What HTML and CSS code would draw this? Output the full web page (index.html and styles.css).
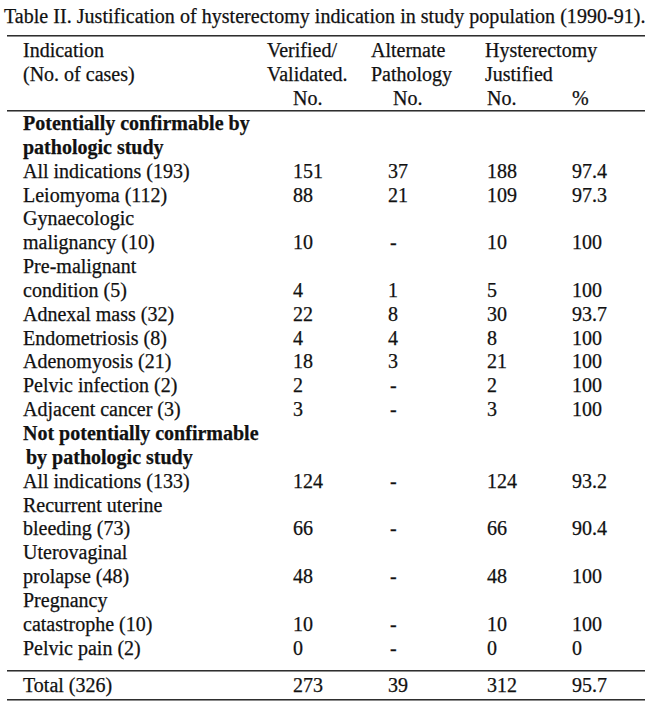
FILE: index.html
```html
<!DOCTYPE html>
<html lang="en">
<head>
<meta charset="utf-8">
<title>Table II</title>
<link rel="stylesheet" href="styles.css">
</head>
<body>
<div class="page">
  <div class="title">Table II. Justification of hysterectomy indication in study population (1990-91).</div>
  <div class="rule rule-top"></div>
  <div class="head">
    <div class="row"><div>Indication</div><div>Verified/</div><div>Alternate</div><div class="wide">Hysterectomy</div><div></div></div>
    <div class="row"><div>(No. of cases)</div><div>Validated.</div><div>Pathology</div><div>Justified</div><div></div></div>
    <div class="row"><div></div><div class="n1">No.</div><div class="h2">No.</div><div class="n3">No.</div><div class="n4">%</div></div>
  </div>
  <div class="rule rule-mid"></div>
  <div class="body">
    <div class="row"><div class="b">Potentially confirmable by</div></div>
    <div class="row"><div class="b">pathologic study</div></div>
    <div class="row"><div>All indications (193)</div><div class="n1">151</div><div class="n2">37</div><div class="n3">188</div><div class="n4">97.4</div></div>
    <div class="row"><div>Leiomyoma (112)</div><div class="n1">88</div><div class="n2">21</div><div class="n3">109</div><div class="n4">97.3</div></div>
    <div class="row"><div>Gynaecologic</div></div>
    <div class="row"><div>malignancy (10)</div><div class="n1">10</div><div class="n2 dash">-</div><div class="n3">10</div><div class="n4">100</div></div>
    <div class="row"><div>Pre-malignant</div></div>
    <div class="row"><div>condition (5)</div><div class="n1">4</div><div class="n2">1</div><div class="n3">5</div><div class="n4">100</div></div>
    <div class="row"><div>Adnexal mass (32)</div><div class="n1">22</div><div class="n2">8</div><div class="n3">30</div><div class="n4">93.7</div></div>
    <div class="row"><div>Endometriosis (8)</div><div class="n1">4</div><div class="n2">4</div><div class="n3">8</div><div class="n4">100</div></div>
    <div class="row"><div>Adenomyosis (21)</div><div class="n1">18</div><div class="n2">3</div><div class="n3">21</div><div class="n4">100</div></div>
    <div class="row"><div>Pelvic infection (2)</div><div class="n1">2</div><div class="n2 dash">-</div><div class="n3">2</div><div class="n4">100</div></div>
    <div class="row"><div>Adjacent cancer (3)</div><div class="n1">3</div><div class="n2 dash">-</div><div class="n3">3</div><div class="n4">100</div></div>
    <div class="row"><div class="b">Not potentially confirmable</div></div>
    <div class="row"><div class="b indent">by pathologic study</div></div>
    <div class="row"><div>All indications (133)</div><div class="n1">124</div><div class="n2 dash">-</div><div class="n3">124</div><div class="n4">93.2</div></div>
    <div class="row"><div>Recurrent uterine</div></div>
    <div class="row"><div>bleeding (73)</div><div class="n1">66</div><div class="n2 dash">-</div><div class="n3">66</div><div class="n4">90.4</div></div>
    <div class="row"><div>Uterovaginal</div></div>
    <div class="row"><div>prolapse (48)</div><div class="n1">48</div><div class="n2 dash">-</div><div class="n3">48</div><div class="n4">100</div></div>
    <div class="row"><div>Pregnancy</div></div>
    <div class="row"><div>catastrophe (10)</div><div class="n1">10</div><div class="n2 dash">-</div><div class="n3">10</div><div class="n4">100</div></div>
    <div class="row"><div>Pelvic pain (2)</div><div class="n1">0</div><div class="n2 dash">-</div><div class="n3">0</div><div class="n4">0</div></div>
  </div>
  <div class="rule rule-total"></div>
  <div class="total">
    <div class="row"><div>Total (326)</div><div class="n1">273</div><div class="n2">39</div><div class="n3">312</div><div class="n4">95.7</div></div>
  </div>
  <div class="rule rule-bottom"></div>
</div>
</body>
</html>
```

FILE: styles.css
```css
html, body {
  margin: 0;
  padding: 0;
  background: #ffffff;
}

.page {
  width: 650px;
  height: 712px;
  font-family: "Liberation Serif", "Times New Roman", serif;
  font-size: 20px;
  color: #111111;
  -webkit-text-stroke: 0.25px #111111;
  padding-top: 4px;
  box-sizing: border-box;
  overflow: hidden;
}

.title {
  line-height: 24px;
  padding-left: 4px;
  white-space: nowrap;
  letter-spacing: 0.03px;
}

.rule {
  margin-left: 7px;
  width: 638px;
  height: 0;
  border-top: 1px solid #2e2e2e;
  border-bottom: 1px solid #8c8c8c;
}

.rule-top { margin-top: 7px; }
.rule-mid { margin-top: 0; }
.rule-total { margin-top: 10px; }
.rule-bottom { margin-top: 2px; }

.head {
  margin-top: 1px;
}

.head .row {
  line-height: 24px;
}

.body .row {
  line-height: 23.85px;
}

.total .row {
  line-height: 24px;
}

.total {
  margin-top: 1px;
}

.row {
  display: grid;
  grid-template-columns: 244px 104px 114px 85px 1fr;
  padding-left: 23px;
  white-space: nowrap;
}

.row > div {
  overflow: visible;
}

.b {
  font-weight: bold;
}

.indent {
  padding-left: 3px;
}

.n1 { padding-left: 26px; }
.n2 { padding-left: 17px; }
.h2 { padding-left: 22px; }
.n3 { padding-left: 2px; }
.n4 { padding-left: 2px; }

.dash {
  padding-left: 19px;
}
```
